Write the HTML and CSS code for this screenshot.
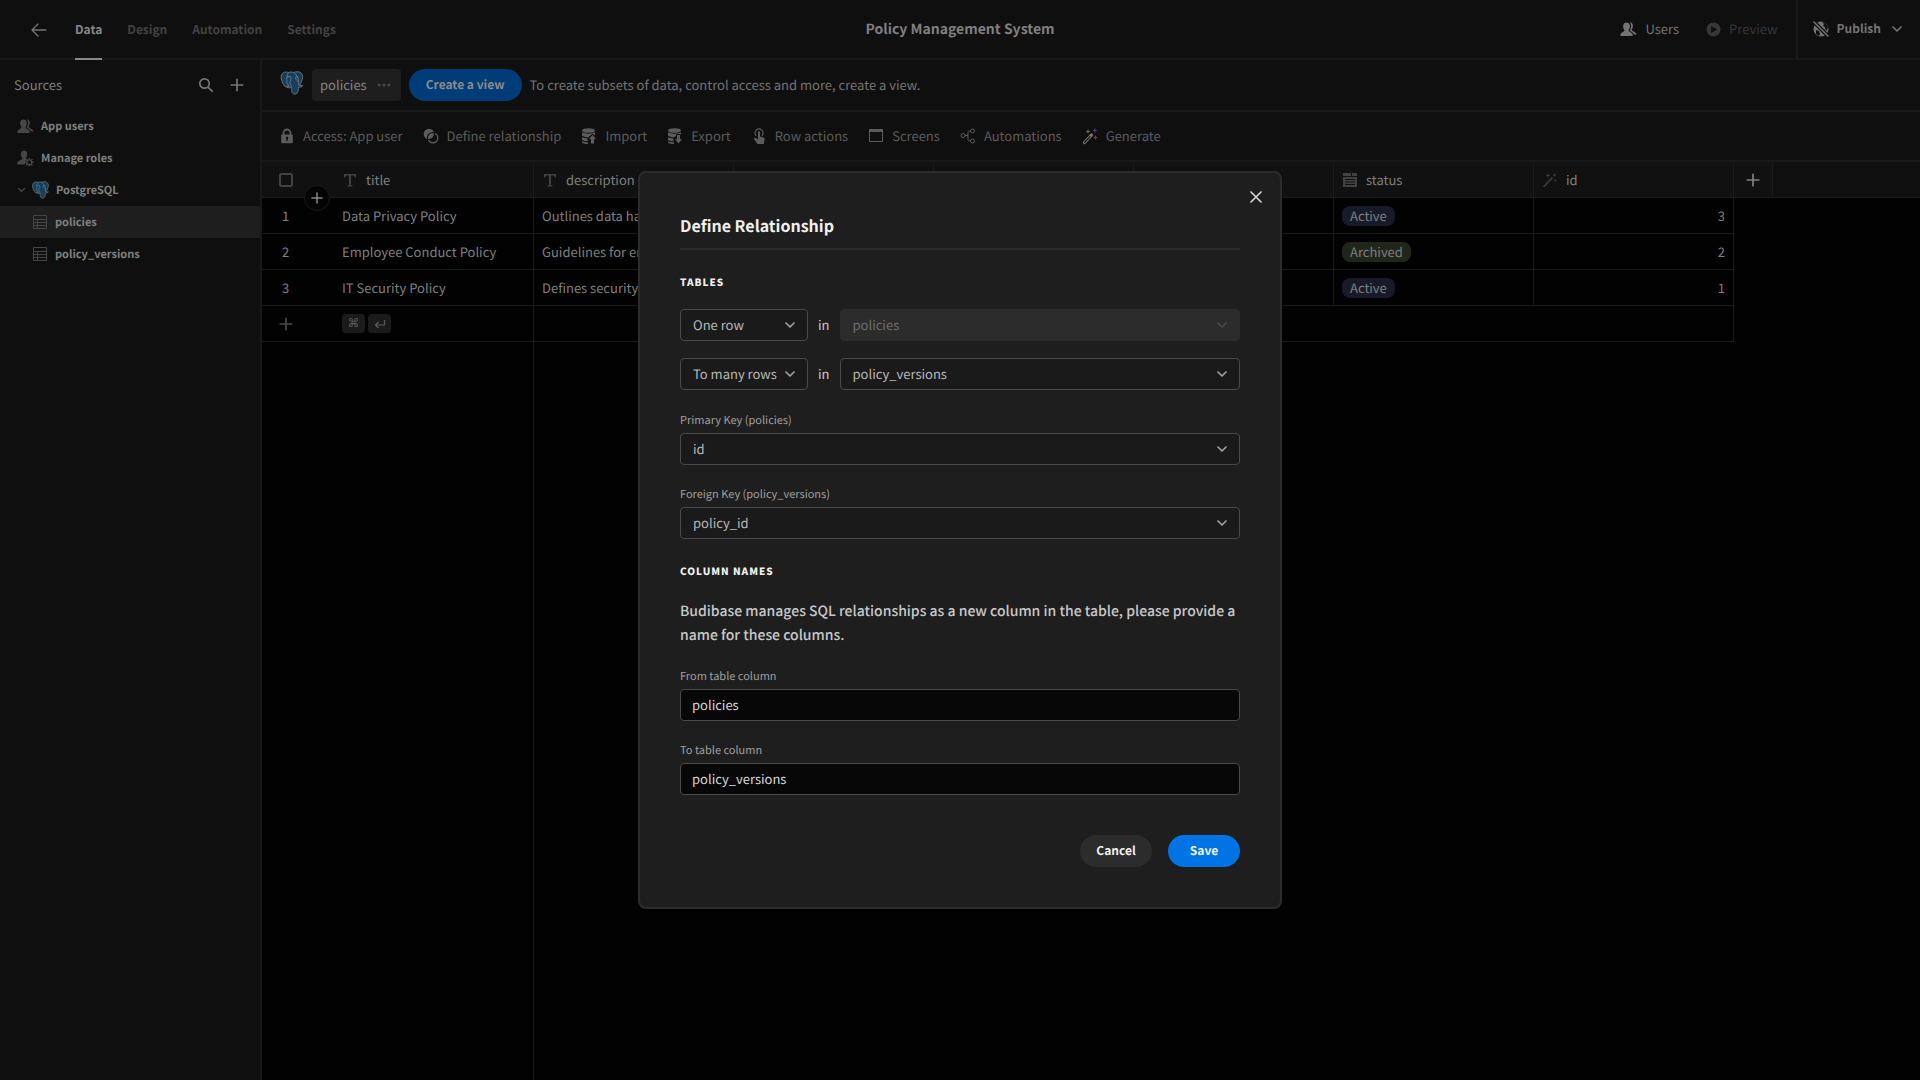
FILE: index.html
```html
<!DOCTYPE html>
<html lang="en">
<head>
    <meta charset="UTF-8">
    <meta name="viewport" content="width=device-width, initial-scale=1.0">
    <title>Policy Management System</title>
    <link rel="stylesheet" href="styles.css">
</head>
<body>

<!-- shared icons -->
<svg class="sprite" aria-hidden="true">
    <symbol id="i-users" viewBox="0 0 18 18">
        <path fill="currentColor" d="M6.9 1.6c2.3 0 3.6 1.6 3.6 3.9 0 1.6-.5 2.9-1.3 3.8v1.2c.1.7 3.9 1.4 4.3 4.2.1.6-.2 1.3-.9 1.3H1.3c-.7 0-1-.7-.9-1.3.4-2.8 4-3.500 4.200-4.200V9.300C3.800 8.400 3.300 7.100 3.300 5.500c0-2.300 1.300-3.900 3.600-3.900z"/>
        <path fill="currentColor" d="M10.300 1.200c2 .1 3.400 1.600 3.400 3.900 0 1.500-.5 2.800-1.300 3.700v1.100c.1.7 4.600 1.700 5.200 4.500h-2.900c-.5-2.200-2.700-3.100-4.200-3.800V9.500c.7-1 1.200-2.400 1.200-4 0-1.700-.5-3.200-1.400-4.300z"/>
    </symbol>
    <symbol id="i-role" viewBox="0 0 18 18">
        <path fill="currentColor" d="M7.500.5c2.100 0 3.400 1.500 3.400 3.900 0 1.600-.6 2.900-1.400 3.800v1.300l.9.6-1.900 1.900.3 2.200-.5 1.100H.8c-.5 0-.8-.5-.7-1.100.4-2.700 4.900-3.800 5.400-4.600V8.200C4.700 7.300 4.100 6 4.100 4.400 4.100 2 5.400.5 7.500.5z"/>
        <circle cx="13" cy="13" r="2.600" fill="none" stroke="currentColor" stroke-width="1.400"/>
        <path fill="none" stroke="currentColor" stroke-width="1.500" d="M13 8.400v1.700M13 15.900v1.700M8.400 13h1.700M15.900 13h1.700M9.700 9.700l1.200 1.200M15.100 15.100l1.200 1.200M9.700 16.300l1.200-1.200M15.100 10.900l1.200-1.200"/>
    </symbol>
    <symbol id="i-postgres" viewBox="0 0 24 25">
        <path fill="#153f5c" stroke="#67767f" stroke-width="1" stroke-linejoin="round" d="M8.300 1.600C5.700.6 2.500.9 1.100 4c-1.300 3.500 1 8.700 2.600 11 1.500 2.200 3 1.600 4.600-.2l1 .8c-.9.8-2 .9-2.900 1 2 1.600 4.300.8 4.900.2.300 3-.2 7.300 3.700 7.300 3.400-.2 3.500-4.100 3.900-7.400 1.500.3 3.700-.2 4.300-1.700-1.200.2-2.400.3-3.100-.2 2-3.600 4-8.800 2.400-11.500-1.900-3-5.800-3-8.800-1.700C12.300.9 9.500.9 8.300 1.600z"/>
        <path fill="none" stroke="#67767f" stroke-width="1" stroke-linecap="round" d="M8.300 1.600C6.500 4 6.600 8 6.600 11c0 1.600.5 2.900 1.700 3.800M6.800 6.300c1.400-1 3.200-1 4.200 0 .9 2.400-1.700 4-1.200 6.300.3 1.500 1.600 1.800 1.500 4.100M13.700 1.600C17 3.500 18.500 7.700 18.800 10c.3 1.700-.4 2.900.3 5M18.300 6.400c-1.300-.9-2.600-.3-2.700.6-.1 1.800 1.700 3.500 3.300 4.200"/>
        <path fill="#67767f" d="M8.500 5.900l1.800.1-.9.9zM16 6.300l1.600-.2-.7.9z"/>
    </symbol>
    <symbol id="i-table" viewBox="0 0 16 16">
        <path fill="none" stroke="currentColor" d="M1.500 1.500h13v13h-13zM1.500 5.500h13M1.500 8.500h13M1.500 11.500h13M5.500 5.500v9"/>
    </symbol>
    <symbol id="i-plus" viewBox="0 0 14 14">
        <path fill="none" stroke="currentColor" stroke-width="1.500" stroke-linecap="round" d="M7 2v10M2 7h10"/>
    </symbol>
    <symbol id="i-chevron" viewBox="0 0 12 8">
        <path fill="none" stroke="currentColor" stroke-width="1.700" stroke-linecap="round" stroke-linejoin="round" d="M2 2l4 4 4-4"/>
    </symbol>
    <symbol id="i-text" viewBox="0 0 14 14">
        <path fill="currentColor" d="M1 1h12v3.500h-1.200c-.1-1.300-.5-2-1.800-2H8v9c0 .8.500 1 1.500 1v1h-5v-1c1 0 1.500-.2 1.500-1v-9H4c-1.300 0-1.700.7-1.800 2H1z"/>
    </symbol>
    <symbol id="i-db" viewBox="0 0 16 16">
        <ellipse cx="7.500" cy="2.500" rx="6.500" ry="2.300" fill="currentColor"/>
        <path fill="currentColor" d="M1 4.200c3 1.900 10 1.900 13 0v3.300L11.500 5.800 7 9.400C4.500 9.300 2 8.700 1 7.800zM1 9c1.500 1 3.500 1.400 5.500 1.500v3c-2-.1-4.500-.5-5.500-1.400zM1 13.300c1.500.8 3.500 1.100 6 1.200V16c-3 0-6-.6-6-1.800z"/>
    </symbol>
</svg>

<header class="topbar">
    <nav class="tabs">
        <a href="#" class="back" aria-label="Back">
            <svg width="16" height="14" viewBox="0 0 16 14" fill="none" stroke="currentColor" stroke-width="1.300" stroke-linecap="round" stroke-linejoin="round"><path d="M7 1L1 7l6 6M1 7h14"/></svg>
        </a>
        <a href="#" class="tab active">Data</a>
        <a href="#" class="tab">Design</a>
        <a href="#" class="tab">Automation</a>
        <a href="#" class="tab">Settings</a>
    </nav>
    <h1 class="app-name">Policy Management System</h1>
    <div class="top-actions">
        <button class="top-btn"><svg width="17" height="17"><use href="#i-users"/></svg>Users</button>
        <button class="top-btn" disabled>
            <svg width="15" height="15" viewBox="0 0 16 16"><path fill="currentColor" fill-rule="evenodd" d="M8 .5a7.500 7.500 0 100 15 7.500 7.500 0 000-15zM5.500 4.200v7.600L12 8z"/></svg>Preview
        </button>
        <button class="top-btn publish">
            <svg width="16" height="16" viewBox="0 0 16 16"><circle cx="8" cy="8" r="7.500" fill="currentColor"/><path fill="#0f0f0f" d="M9 1l2 2-1 2 2 1 .5 3 1.500.5 1-4-3-4zM3 9l3 1 1 3-1 2-3-2z"/><path stroke="#0f0f0f" stroke-width="4" d="M0 0l16 16"/><path stroke="currentColor" stroke-width="1.500" stroke-linecap="round" d="M1 1l14 14"/></svg>
            Publish
            <svg class="caret" width="12" height="8"><use href="#i-chevron"/></svg>
        </button>
    </div>
</header>

<div class="workspace">
    <aside class="sidebar">
        <div class="sources-head">
            <h2>Sources</h2>
            <button class="icon-btn" aria-label="Search">
                <svg width="16" height="16" viewBox="0 0 16 16" fill="none" stroke="currentColor" stroke-width="1.700" stroke-linecap="round"><circle cx="6.500" cy="6.500" r="4.700"/><path d="M10.300 10.300L14.300 14.300"/></svg>
            </button>
            <button class="icon-btn" aria-label="Add source"><svg width="16" height="16"><use href="#i-plus"/></svg></button>
        </div>
        <nav class="tree">
            <a href="#" class="node"><svg width="17" height="17"><use href="#i-users"/></svg>App users</a>
            <a href="#" class="node"><svg width="17" height="17"><use href="#i-role"/></svg>Manage roles</a>
            <a href="#" class="node">
                <svg class="twist" width="9" height="6"><use href="#i-chevron"/></svg><svg width="17" height="18"><use href="#i-postgres"/></svg>PostgreSQL
            </a>
            <a href="#" class="node child selected"><svg width="16" height="16"><use href="#i-table"/></svg>policies</a>
            <a href="#" class="node child"><svg width="16" height="16"><use href="#i-table"/></svg>policy_versions</a>
        </nav>
    </aside>

    <main class="main">
        <div class="viewbar">
            <svg class="engine" width="24" height="24"><use href="#i-postgres"/></svg>
            <button class="view-tab">policies
                <svg width="14" height="4" viewBox="0 0 14 4" fill="#4a4a4a"><circle cx="2" cy="2" r="1.500"/><circle cx="7" cy="2" r="1.500"/><circle cx="12" cy="2" r="1.500"/></svg>
            </button>
            <button class="create-view">Create a view</button>
            <span class="hint">To create subsets of data, control access and more, create a view.</span>
        </div>

        <div class="toolbar">
            <button class="tool">
                <svg width="16" height="16" viewBox="0 0 16 16"><path fill="none" stroke="currentColor" stroke-width="1.800" d="M4.500 7V5a3.500 3.500 0 017 0v2"/><path fill="currentColor" fill-rule="evenodd" d="M3 6.500h10c.5 0 .8.300.8.800v7.200c0 .5-.3.800-.8.800H3c-.5 0-.8-.3-.8-.8V7.300c0-.5.300-.8.800-.8zM7.200 10.800v2h1.600v-2a1.300 1.300 0 10-1.600 0z"/></svg>
                Access: App user
            </button>
            <button class="tool">
                <svg width="16" height="16" viewBox="0 0 16 16"><circle cx="6" cy="6" r="5.300" fill="currentColor"/><circle cx="10" cy="10" r="4.800" fill="none" stroke="currentColor" stroke-width="1.400"/><path fill="none" stroke="#0f0f0f" stroke-width="1.100" d="M11.300 4.700A5.300 5.300 0 004.700 11.300M11.300 4.700a5.300 5.300 0 01-6.600 6.600"/></svg>
                Define relationship
            </button>
            <button class="tool">
                <svg width="16" height="16" viewBox="0 0 16 16"><use href="#i-db"/><path fill="currentColor" stroke="#0f0f0f" d="M11.500 6.500L16 11.500h-2.500V16h-4v-4.500H7z"/></svg>
                Import
            </button>
            <button class="tool">
                <svg width="16" height="16" viewBox="0 0 16 16"><use href="#i-db"/><path fill="currentColor" stroke="#0f0f0f" d="M11.500 16L7 11h2.500V6.500h4V11H16z"/></svg>
                Export
            </button>
            <button class="tool">
                <svg width="16" height="16" viewBox="0 0 16 16"><path fill="none" stroke="currentColor" stroke-width="1.200" d="M5.200 7.800A4 4 0 1110.800 7.800"/><path fill="currentColor" d="M7 3.500c.8-.8 2 0 2 .8v4.200l3.500.9c.8.200 1.200.8 1.100 1.500l-.6 4.300c0 .4-.4.800-.8.800H6.500L3 11.200c-.5-1.200.8-1.900 1.700-1.200L7 11.500z"/></svg>
                Row actions
            </button>
            <button class="tool">
                <svg width="16" height="16" viewBox="0 0 16 16"><path fill="none" stroke="currentColor" d="M1.500 1.500h13v12h-13z"/><path fill="currentColor" d="M1 1h14v3H1z"/></svg>
                Screens
            </button>
            <button class="tool">
                <svg width="16" height="16" viewBox="0 0 16 16" fill="none" stroke="currentColor"><circle cx="3" cy="7.500" r="2"/><circle cx="12.500" cy="3" r="2"/><circle cx="12.500" cy="13" r="2"/><path d="M5 7.500h3M10.500 3H9.500C8.500 3 8 3.500 8 4.500v7c0 1 .5 1.500 1.500 1.500h1"/></svg>
                Automations
            </button>
            <button class="tool">
                <svg width="16" height="17" viewBox="0 0 16 17"><path fill="none" stroke="#777" stroke-width="3.200" stroke-linecap="round" d="M2.500 14.500l7-7.500"/><path stroke="#161616" stroke-width="1.200" stroke-linecap="round" d="M2.500 14.500L8 8.700"/><path fill="#716a35" d="M6 1l.7 1.800 1.800.7-1.800.7L6 6l-.7-1.800-1.800-.7 1.800-.7z"/><path fill="#44407e" d="M13 0l.7 1.800 1.800.7-1.800.7L13 5l-.7-1.800-1.800-.7 1.800-.7z"/><path fill="#8a3535" d="M13.500 7l.7 1.800 1.800.7-1.800.7-.7 1.800-.7-1.800-1.800-.7 1.800-.7z"/></svg>
                Generate
            </button>
        </div>

        <div class="grid-wrap">
            <table class="grid">
                <colgroup>
                    <col class="c-gutter"><col class="c-data"><col class="c-data"><col class="c-data"><col class="c-data"><col class="c-data"><col class="c-data"><col class="c-data"><col class="c-add"><col>
                </colgroup>
                <thead>
                    <tr>
                        <th class="gutter">
                            <input type="checkbox" aria-label="Select all rows">
                            <button class="add-row" aria-label="Add row"><svg width="14" height="14"><use href="#i-plus"/></svg></button>
                        </th>
                        <th><span class="col"><svg width="14" height="14"><use href="#i-text"/></svg>title</span></th>
                        <th><span class="col"><svg width="14" height="14"><use href="#i-text"/></svg>description</span></th>
                        <th></th>
                        <th></th>
                        <th></th>
                        <th><span class="col"><svg width="14" height="14" viewBox="0 0 14 14"><path fill="currentColor" fill-rule="evenodd" d="M0 0h8v3H0zM9 0h5v3H9zM0 4h14v10H0zM2 6v1h10V6zM2 8.500v1h10v-1zM2 11v1h10v-1z"/></svg>status</span></th>
                        <th><span class="col"><svg width="14" height="14" viewBox="0 0 14 14"><path stroke="currentColor" stroke-width="1.400" stroke-linecap="round" d="M1 13.500L9 5"/><path fill="currentColor" d="M5 0l.6 1.900 1.900.6-1.900.6L5 5l-.6-1.900-1.900-.6 1.900-.6zM11.500 0l.6 1.400 1.400.6-1.400.6-.6 1.400-.6-1.400L9.500 2l1.400-.6zM12.500 6l.4 1.100L14 7.500l-1.100.4-.4 1.100-.4-1.100L11 7.500l1.100-.4z"/></svg>id</span></th>
                        <th class="add-col"><button class="icon-btn" aria-label="Add column"><svg width="16" height="16"><use href="#i-plus"/></svg></button></th>
                        <th class="rest"></th>
                    </tr>
                </thead>
                <tbody>
                    <tr>
                        <td class="gutter">1</td><td>Data Privacy Policy</td><td>Outlines data handling</td><td></td><td></td><td></td>
                        <td><span class="tag blue">Active</span></td><td class="num">3</td><td class="blank" colspan="2"></td>
                    </tr>
                    <tr>
                        <td class="gutter">2</td><td>Employee Conduct Policy</td><td>Guidelines for employees</td><td></td><td></td><td></td>
                        <td><span class="tag green">Archived</span></td><td class="num">2</td><td class="blank" colspan="2"></td>
                    </tr>
                    <tr>
                        <td class="gutter">3</td><td>IT Security Policy</td><td>Defines security rules</td><td></td><td></td><td></td>
                        <td><span class="tag blue">Active</span></td><td class="num">1</td><td class="blank" colspan="2"></td>
                    </tr>
                    <tr>
                        <td class="gutter new"><svg width="16" height="16"><use href="#i-plus"/></svg></td>
                        <td><span class="keys"><kbd>⌘</kbd><kbd><svg width="12" height="10" viewBox="0 0 12 10" fill="none" stroke="currentColor" stroke-width="1.200"><path d="M10.500 1v5H2M4.500 3L1.500 6l3 3"/></svg></kbd></span></td>
                        <td colspan="6"></td><td class="blank" colspan="2"></td>
                    </tr>
                    <tr class="filler">
                        <td class="pinned" colspan="2"></td><td class="blank" colspan="8"></td>
                    </tr>
                </tbody>
            </table>
        </div>
    </main>
</div>

<div class="underlay">
    <form class="modal" role="dialog" aria-labelledby="modal-title">
        <button type="button" class="close" aria-label="Close">
            <svg width="12" height="12" viewBox="0 0 12 12" fill="none" stroke="currentColor" stroke-width="1.700" stroke-linecap="round"><path d="M1 1l10 10M11 1L1 11"/></svg>
        </button>
        <h2 id="modal-title" class="modal-title">Define Relationship</h2>

        <h3 class="section">Tables</h3>
        <div class="pair">
            <div class="picker">
                <select aria-label="From type"><option>One row</option></select>
                <svg width="12" height="8"><use href="#i-chevron"/></svg>
            </div>
            <span>in</span>
            <div class="picker">
                <select aria-label="From table" disabled><option>policies</option></select>
                <svg width="12" height="8"><use href="#i-chevron"/></svg>
            </div>
        </div>
        <div class="pair">
            <div class="picker">
                <select aria-label="To type"><option>To many rows</option></select>
                <svg width="12" height="8"><use href="#i-chevron"/></svg>
            </div>
            <span>in</span>
            <div class="picker">
                <select aria-label="To table"><option>policy_versions</option></select>
                <svg width="12" height="8"><use href="#i-chevron"/></svg>
            </div>
        </div>
        <div class="field">
            <label for="primary">Primary Key (policies)</label>
            <div class="picker">
                <select id="primary"><option>id</option></select>
                <svg width="12" height="8"><use href="#i-chevron"/></svg>
            </div>
        </div>
        <div class="field">
            <label for="foreign">Foreign Key (policy_versions)</label>
            <div class="picker">
                <select id="foreign"><option>policy_id</option></select>
                <svg width="12" height="8"><use href="#i-chevron"/></svg>
            </div>
        </div>

        <h3 class="section">Column names</h3>
        <p class="note">Budibase manages SQL relationships as a new column in the table, please provide a name for these columns.</p>
        <div class="field">
            <label for="from-col">From table column</label>
            <input type="text" id="from-col" value="policies">
        </div>
        <div class="field">
            <label for="to-col">To table column</label>
            <input type="text" id="to-col" value="policy_versions">
        </div>

        <div class="buttons">
            <button type="button" class="btn">Cancel</button>
            <button type="submit" class="btn save">Save</button>
        </div>
    </form>
</div>

</body>
</html>
```
FILE: styles.css
```css
* {
    box-sizing: border-box;
}
body {
    margin: 0;
    min-height: 100vh;
    display: flex;
    flex-direction: column;
    background-color: #020202;
    color: #7f7f7f;
    font-family: "Noto Sans CJK JP", "Noto Sans CJK SC", sans-serif;
    font-size: 13px;
    line-height: 20px;
    text-rendering: geometricPrecision;
}
h1, h2, h3, p {
    margin: 0;
}
a {
    color: inherit;
    text-decoration: none;
}
button {
    margin: 0;
    padding: 0;
    border: none;
    background: none;
    color: inherit;
    font: inherit;
    text-rendering: inherit;
    cursor: pointer;
}
svg {
    display: block;
    flex: none;
}
.sprite {
    position: absolute;
    width: 0;
    height: 0;
}

/* top bar */
.topbar {
    display: grid;
    grid-template-columns: 1fr auto 1fr;
    height: 60px;
    background-color: #0f0f0f;
    border-bottom: 2px solid #191919;
}
.tabs {
    display: flex;
    align-items: stretch;
    gap: 25px;
    padding-left: 31px;
    margin-bottom: -2px;
}
.back {
    display: flex;
    align-items: center;
    margin-right: 3px;
    color: #747474;
}
.tab {
    padding: 20px 0 18px;
    border-bottom: 2px solid transparent;
    color: #424242;
    font-size: 12px;
    font-weight: 700;
}
.tab.active {
    color: #888;
    border-bottom-color: #888;
}
.app-name {
    align-self: center;
    font-size: 14px;
    font-weight: 700;
    color: #808080;
}
.top-actions {
    display: flex;
    justify-content: flex-end;
}
.top-btn {
    display: flex;
    align-items: center;
    gap: 8px;
    margin-right: 27px;
    color: #747474;
}
.top-btn:disabled {
    margin-right: 18px;
    color: #373737;
}
.publish {
    margin: 0;
    padding: 0 17px 0 15px;
    border-left: 2px solid #191919;
    font-size: 12px;
    font-weight: 700;
}
.caret {
    margin-left: 2px;
}

/* sidebar */
.workspace {
    flex: 1;
    display: flex;
}
.sidebar {
    flex: none;
    width: 262px;
    background-color: #0f0f0f;
    border-right: 2px solid #191919;
}
.sources-head {
    display: flex;
    align-items: center;
    gap: 15px;
    height: 50px;
    padding: 0 15px 0 14px;
    color: #747474;
}
.sources-head h2 {
    flex: 1;
    font-size: 13px;
    font-weight: 400;
    color: #7f7f7f;
}
.icon-btn {
    display: flex;
}
.node {
    display: flex;
    align-items: center;
    gap: 7px;
    height: 32px;
    padding-left: 17px;
    font-size: 11px;
    font-weight: 700;
    color: #808080;
}
.node svg {
    color: #464646;
}
.node .twist {
    margin-right: -1px;
}
.node.child {
    padding-left: 32px;
}
.node.selected {
    background-color: #1e1e1e;
}

/* view bar and toolbar */
.main {
    flex: 1;
    min-width: 0;
    display: flex;
    flex-direction: column;
}
.viewbar, .toolbar {
    display: flex;
    align-items: center;
    background-color: #0f0f0f;
    border-bottom: 2px solid #191919;
}
.viewbar {
    gap: 8px;
    height: 52px;
    padding-left: 18px;
}
.engine {
    margin-bottom: 4px;
}
.view-tab {
    display: flex;
    align-items: center;
    gap: 10px;
    height: 32px;
    padding: 0 10px 0 8px;
    border-radius: 4px;
    background-color: #1e1e1e;
    color: #858585;
}
.create-view {
    height: 32px;
    padding: 0 17px;
    border-radius: 16px;
    background-color: #003c78;
    font-size: 12px;
    font-weight: 700;
    color: #8a8a8a;
}
.hint {
    color: #747474;
}
.toolbar {
    gap: 20px;
    height: 50px;
    padding-left: 17px;
}
.tool {
    display: flex;
    align-items: center;
    gap: 8px;
    color: #5c5c5c;
}

/* data grid */
.grid-wrap {
    flex: 1;
    display: grid;
}
.grid {
    width: 100%;
    height: 100%;
    table-layout: fixed;
    border-collapse: separate;
    border-spacing: 0;
}
.c-gutter {
    width: 72px;
}
.c-data {
    width: 200px;
}
.c-add {
    width: 39px;
}
.grid th, .grid td {
    height: 36px;
    padding: 0 8px;
    border-right: 1px solid #1a1a1a;
    border-bottom: 1px solid #1a1a1a;
    text-align: left;
    font-weight: 400;
    white-space: nowrap;
    overflow: hidden;
}
.grid th {
    background-color: #111;
}
.grid .gutter {
    position: relative;
    padding: 0 0 0 16px;
    border-right: none;
    overflow: visible;
}
.grid td.gutter {
    padding-left: 20px;
}
.grid td.new {
    padding-left: 16px;
    color: #4a4a4a;
}
.gutter input {
    appearance: none;
    display: block;
    width: 14px;
    height: 14px;
    margin: 0 0 0 1px;
    border: 2px solid #424242;
    border-radius: 2px;
}
.add-row {
    position: absolute;
    right: 4px;
    bottom: -14px;
    display: flex;
    align-items: center;
    justify-content: center;
    width: 26px;
    height: 26px;
    border: 1px solid #1a1a1a;
    border-radius: 50%;
    background-color: #040404;
    color: #858585;
}
.col {
    display: flex;
    align-items: center;
    gap: 9px;
    padding-left: 1px;
}
.col svg {
    color: #424242;
}
.grid .add-col {
    padding: 0 11px;
}
.grid .rest {
    border-right: none;
    background-color: #0f0f0f;
}
.grid .blank {
    border: none;
}
.grid .num {
    text-align: right;
}
.tag {
    display: inline-block;
    padding: 0 8px;
    border-radius: 8px;
}
.tag.blue {
    background-color: #171b29;
}
.tag.green {
    background-color: #20261a;
}
.keys {
    display: flex;
    gap: 3px;
}
kbd {
    display: flex;
    align-items: center;
    justify-content: center;
    width: 23px;
    height: 19px;
    border-radius: 4px;
    background-color: #1b1b1b;
    font: 12px/19px "DejaVu Sans", sans-serif;
    color: #5c5c5c;
}
.grid .filler td {
    height: auto;
    border-bottom: none;
}

/* modal */
.underlay {
    position: fixed;
    inset: 0;
    display: flex;
    align-items: center;
    justify-content: center;
}
.modal {
    position: relative;
    width: 644px;
    max-width: 100%;
    padding: 40px;
    border: 2px solid #2c2c2c;
    border-radius: 8px;
    background-color: #1e1e1e;
    color: #c8c8c8;
}
.close {
    position: absolute;
    top: 18px;
    right: 18px;
    color: #d0d0d0;
}
.modal-title {
    padding-bottom: 11px;
    border-bottom: 2px solid #2c2c2c;
    font-size: 16px;
    line-height: 24px;
    font-weight: 700;
    color: #f0f0f0;
}
.section {
    margin: 24px 0 19px;
    font-size: 10px;
    line-height: 16px;
    font-weight: 900;
    letter-spacing: 1px;
    text-transform: uppercase;
    color: #f0f0f0;
}
.pair {
    display: grid;
    grid-template-columns: 128px auto 1fr;
    align-items: center;
    gap: 10px;
    margin-bottom: 17px;
}
.picker {
    position: relative;
}
.picker svg {
    position: absolute;
    top: 12px;
    right: 12px;
    pointer-events: none;
    color: #a0a0a0;
}
select, input[type="text"] {
    display: block;
    width: 100%;
    height: 32px;
    margin: 0;
    border: 1px solid #4a4a4a;
    border-radius: 4px;
    font: inherit;
    text-rendering: inherit;
    outline: none;
}
select {
    appearance: none;
    padding: 0 12px;
    background-color: #1a1a1a;
    color: #b8b8b8;
}
select:disabled {
    border-color: #2c2c2c;
    background-color: #2c2c2c;
    color: #6e6e6e;
    opacity: 1;
}
select:disabled + svg {
    color: #4a4a4a;
}
input[type="text"] {
    padding: 0 11px 2px;
    background-color: #070707;
    color: #d8d8d8;
}
.field {
    margin-bottom: 16px;
}
.field label {
    display: block;
    font-size: 11px;
    line-height: 26px;
    color: #a0a0a0;
}
.note {
    margin: 20px 0 16px;
    font-size: 14px;
    line-height: 24px;
    font-weight: 500;
}
.buttons {
    display: flex;
    justify-content: flex-end;
    gap: 16px;
    margin-top: 40px;
}
.btn {
    height: 32px;
    min-width: 72px;
    padding: 0 16px;
    border-radius: 16px;
    background-color: #2c2c2c;
    font-size: 12px;
    font-weight: 700;
    color: #f0f0f0;
}
.btn.save {
    background-color: #0074e4;
}
```
